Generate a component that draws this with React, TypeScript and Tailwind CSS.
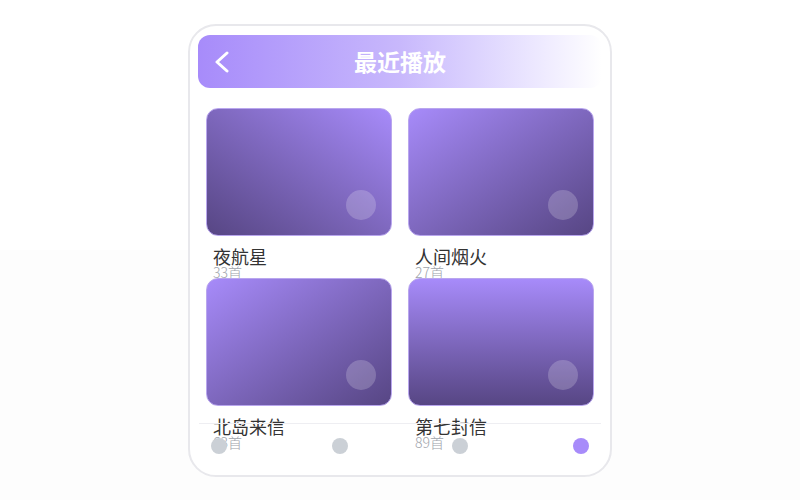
const playlists = [
    { id: 1, name: "夜航星", count: 33, bg: "bg-gradient-to-bl" },
    { id: 2, name: "人间烟火", count: 27, bg: "bg-gradient-to-br" },
    { id: 3, name: "北岛来信", count: 63, bg: "bg-gradient-to-br" },
    { id: 4, name: "第七封信", count: 89, bg: "bg-gradient-to-b" },
];

export default function App() {
    return (
        <div
            className="w-[800px] h-[500px] bg-gradient-to-b from-white from-50% to-[#fdfdfd] to-50% flex items-start justify-center pt-6"
            style={{ fontFamily: '"Noto Sans CJK SC", "Noto Sans", sans-serif' }}
        >
            <div className="relative w-[424px] h-[453px] bg-white border-2 border-[#e8e8ec] rounded-[28px] px-2 pt-[9px] overflow-hidden">
                <div className="relative h-[53px] rounded-xl bg-gradient-to-r from-[#a78bfa] via-[#c8b8fc] via-50% to-white flex items-center justify-center">
                    <svg className="absolute left-[17px] top-[16px]" width="14" height="22" viewBox="0 0 14 22" fill="none">
                        <polyline points="12,2 2,11 12,20" stroke="white" strokeWidth="3" strokeLinecap="round" strokeLinejoin="round" />
                    </svg>
                    <h1 className="text-[23px] font-bold text-white">最近播放</h1>
                </div>

                <div className="grid grid-cols-2 auto-rows-[170px] gap-x-4 px-[8px] pt-5">
                    {playlists.map((p) => (
                        <div key={p.id} className="flex flex-col">
                            <div className={`relative h-32 shrink-0 rounded-xl border border-[#b9a6ee] ${p.bg} from-[#a78bfa] to-[#574684]`}>
                                <div className="absolute right-[15px] bottom-[15px] w-[30px] h-[30px] rounded-full bg-white/20" />
                            </div>
                            <div className="px-[7px] pt-[11px]">
                                <div className="text-[18px] leading-[18px] text-[#333]">{p.name}</div>
                                <div className="text-[14px] leading-[15px] font-light text-[#a0a4ac]">{p.count}首</div>
                            </div>
                        </div>
                    ))}
                </div>

                <div className="absolute left-[9px] right-[9px] bottom-0 h-[52px] border-t border-[#eeeef2] px-[12px] pt-[14px] flex justify-between">
                    <span className="w-4 h-4 rounded-full bg-[#cbd0d6]" />
                    <span className="w-4 h-4 rounded-full bg-[#cbd0d6]" />
                    <span className="w-4 h-4 rounded-full bg-[#cbd0d6]" />
                    <span className="w-4 h-4 rounded-full bg-[#a78bfa]" />
                </div>
            </div>
        </div>
    );
}
